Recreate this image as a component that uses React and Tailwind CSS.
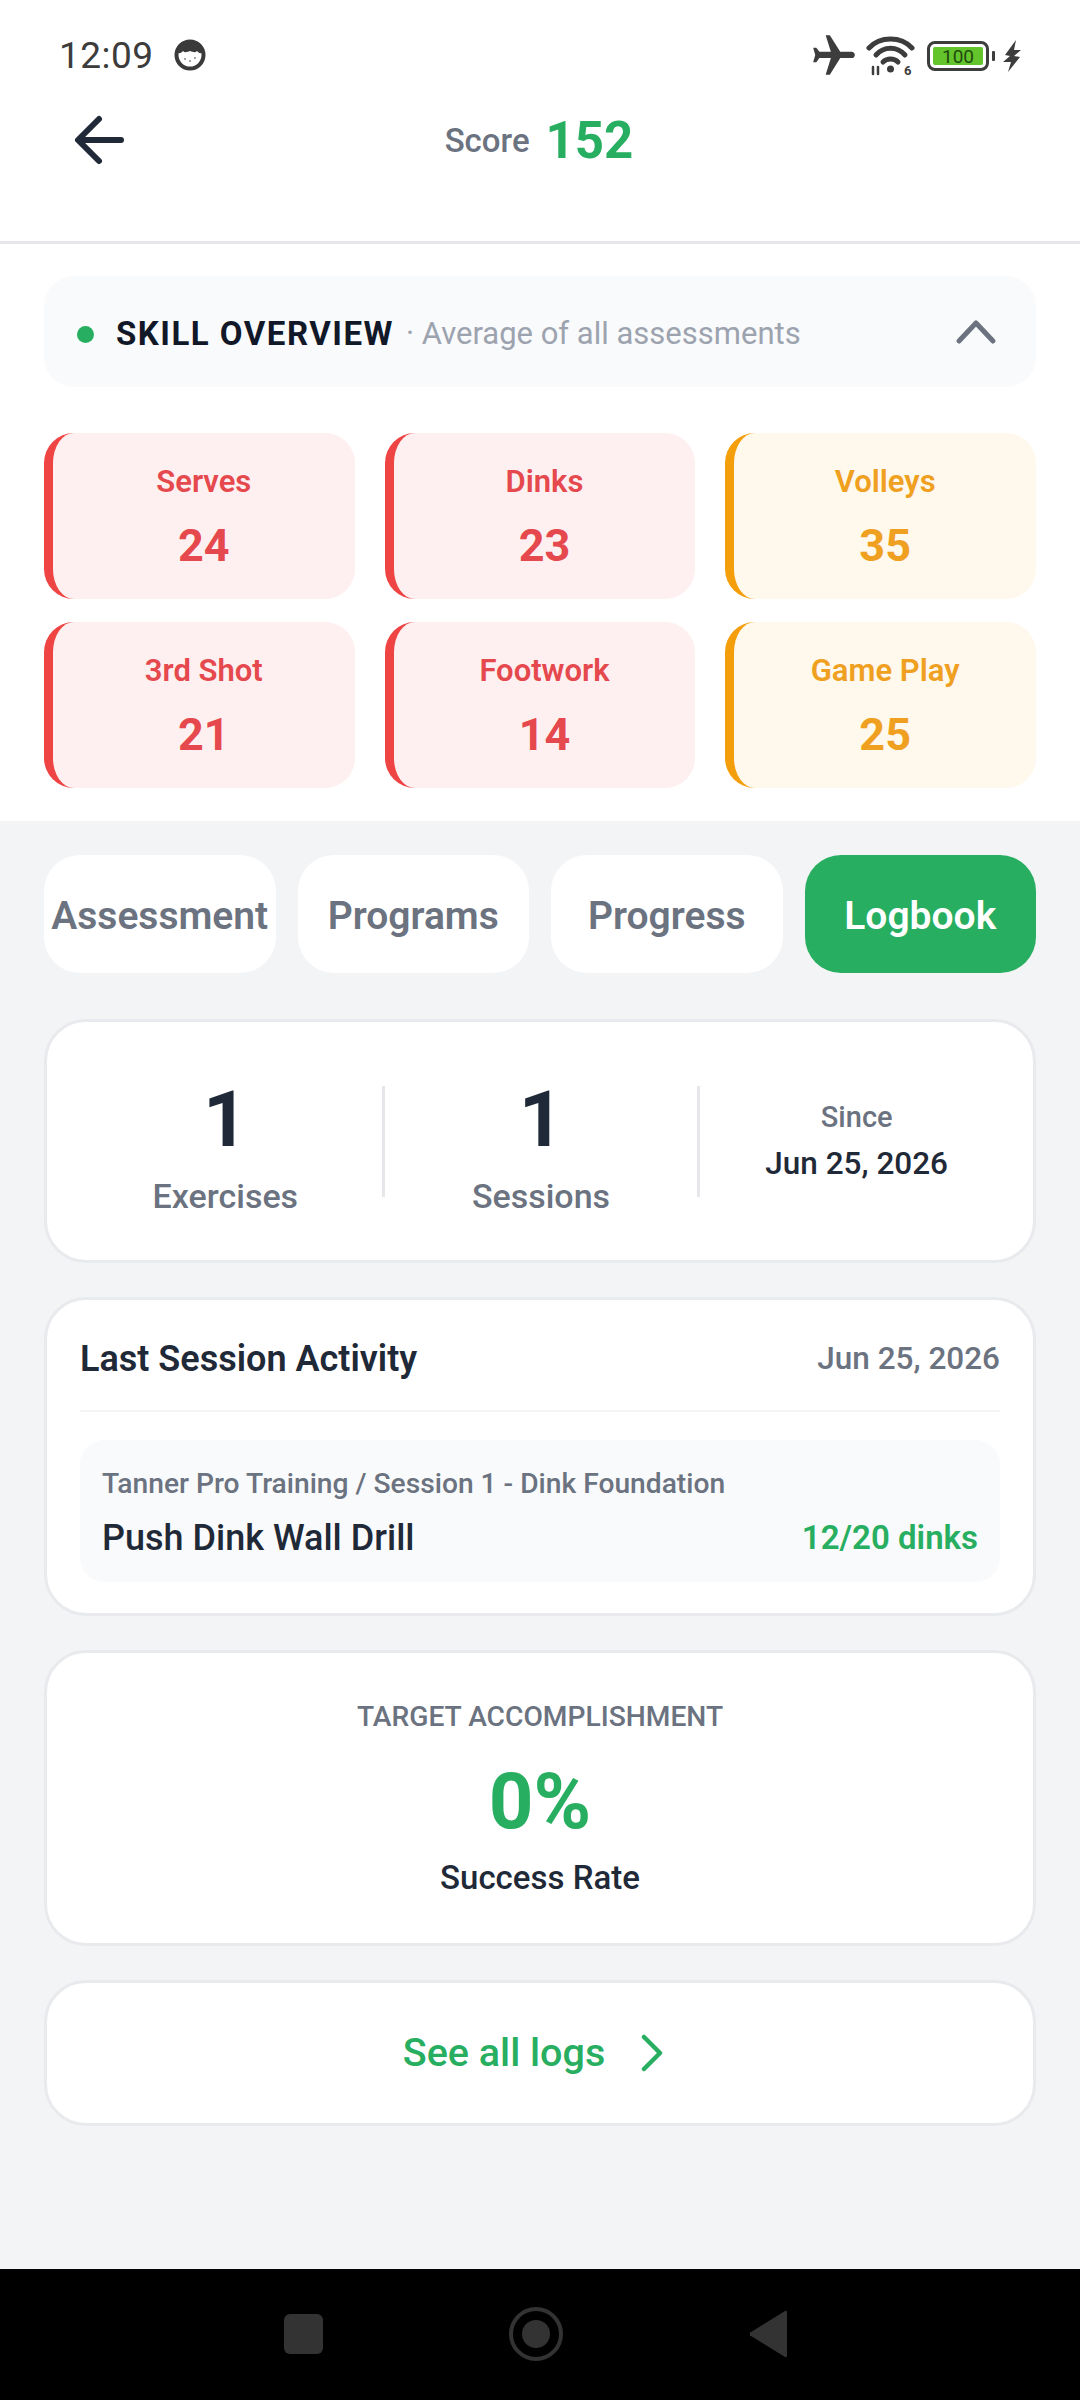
import React from 'react';

const SKILLS = [
    { label: 'Serves', value: 24, tone: 'red' },
    { label: 'Dinks', value: 23, tone: 'red' },
    { label: 'Volleys', value: 35, tone: 'amber' },
    { label: '3rd Shot', value: 21, tone: 'red' },
    { label: 'Footwork', value: 14, tone: 'red' },
    { label: 'Game Play', value: 25, tone: 'amber' },
];

const TABS = ['Assessment', 'Programs', 'Progress', 'Logbook'];

function StatusBar() {
    return (
        <div className="flex h-[88px] items-end justify-between pl-[59px] pr-[58px] pb-[8px]">
            <div className="flex items-center gap-[20px] h-[48px]">
                <span className="text-[37px] leading-[48px] text-[#3c3c3c] tracking-[0.5px]">12:09</span>
                <svg width="32" height="32" viewBox="0 0 32 32" className="mb-[2px]">
                    <circle cx="16" cy="16" r="13.5" fill="#fff" stroke="#3a3a3a" strokeWidth="4" />
                    <path d="M4 14C4 6 10 3 16 3s12 3 12 11c-2 1-4-1-5-2-2 2-4 1-7 0-3 1-5 2-7 0-1 1-3 3-5 2z" fill="#3a3a3a" />
                    <circle cx="11" cy="20" r="1" fill="#888" />
                    <circle cx="16" cy="22" r="1" fill="#888" />
                    <circle cx="21" cy="19" r="1" fill="#888" />
                </svg>
            </div>
            <div className="flex items-center h-[48px]">
                <svg width="50" height="50" viewBox="0 0 24 24" fill="#3d3d3d" className="mr-[7px]">
                    <path transform="rotate(90 12 12)" d="M21 16v-2l-8-5V3.5c0-.83-.67-1.5-1.5-1.5S10 2.67 10 3.5V9l-8 5v2l8-2.5V19l-2 1.5V22l3.5-1 3.5 1v-1.5L13 19v-5.5l8 2.5z" />
                </svg>
                <svg width="50" height="44" viewBox="0 0 50 44" fill="none" stroke="#3d3d3d" strokeLinecap="round" className="mr-[11px] mt-[2px]">
                    <path d="M3 13C14 1 35 1 46 13" strokeWidth="5" />
                    <path d="M10 20C18 11 31 11 39 20" strokeWidth="5" />
                    <path d="M17 27c4-4 11-4 15 0" strokeWidth="5" />
                    <circle cx="24.500" cy="34" r="3.500" fill="#3d3d3d" stroke="none" />
                    <path d="M7 39v-7M12 32v7" strokeWidth="2.500" />
                    <text x="38" y="40" fontSize="13" fontWeight="700" fill="#3d3d3d" stroke="none" fontFamily="Roboto">6</text>
                </svg>
                <div className="flex items-center h-[30px] w-[62px] rounded-[8px] border-[3.5px] border-[#3d3d3d] p-[3px]">
                    <div className="flex items-center justify-center h-full w-full rounded-[2px] bg-[#63c52b] text-[19px] leading-none text-[#1f4a0e]">100</div>
                </div>
                <div className="ml-[3px] h-[10px] w-[3px] rounded-[1px] bg-[#3d3d3d]" />
                <svg width="20" height="32" viewBox="0 0 20 32" fill="#3d3d3d" className="ml-[7px]">
                    <path d="M14 0 3 15l5 1-7 6 8 0-3 10 12-15-6-1 7-6-7 0z" />
                </svg>
            </div>
        </div>
    );
}

function Header() {
    return (
        <div className="relative flex h-[156px] items-start justify-center border-b-[3px] border-[#e5e7eb]">
            <svg width="60" height="60" viewBox="0 0 60 60" fill="none" stroke="#1f2937" strokeWidth="6" strokeLinecap="round" strokeLinejoin="round" className="absolute left-[70px] top-[22px]">
                <path d="M51 30H9M29 9 8 30l21 21" />
            </svg>
            <div className="flex items-center gap-[16px] h-[106px] pr-[2px]">
                <span className="text-[33px] font-medium text-[#6b7280]">Score</span>
                <span className="text-[51px] font-bold text-[#27ae60]">152</span>
            </div>
        </div>
    );
}

function SkillCard({ skill }) {
    const isRed = skill.tone === 'red';
    return (
        <div className={`flex h-[166px] flex-col items-center rounded-[30px] border-l-[9px] pt-[29px] ${isRed ? 'border-[#ef4444] bg-[#fef0f0] text-[#e5484d]' : 'border-[#f59e0b] bg-[#fff8ec] text-[#f0a020]'}`}>
            <span className="text-[31px] leading-[40px] font-semibold">{skill.label}</span>
            <span className="mt-[17px] text-[45px] leading-[54px] font-bold">{skill.value}</span>
        </div>
    );
}

function SkillOverview() {
    return (
        <div className="h-[577px] bg-white px-[44px] pt-[32px]">
            <div className="flex h-[111px] items-center rounded-[30px] bg-[#f9fafb] pl-[33px] pr-[38px] pt-[5px]">
                <span className="h-[17px] w-[17px] rounded-full bg-[#27ae60]" />
                <span className="ml-[22px] text-[33px] font-bold tracking-[1.5px] text-[#111827]">SKILL OVERVIEW</span>
                <span className="ml-[12px] text-[31px] text-[#9ca3af]">· Average of all assessments</span>
                <svg width="44" height="44" viewBox="0 0 44 44" fill="none" stroke="#6b7280" strokeWidth="5" strokeLinecap="round" strokeLinejoin="round" className="ml-auto mb-[5px]">
                    <path d="M5 31 22 13l17 18" />
                </svg>
            </div>
            <div className="mt-[46px] grid grid-cols-3 gap-x-[30px] gap-y-[23px]">
                {SKILLS.map(s => <SkillCard key={s.label} skill={s} />)}
            </div>
        </div>
    );
}

function Tabs() {
    return (
        <div className="grid grid-cols-4 gap-[22px]">
            {TABS.map(t => (
                <div key={t} className={`flex h-[118px] items-center justify-center rounded-[36px] pt-[5px] text-[39px] font-semibold ${t === 'Logbook' ? 'bg-[#27ae60] text-white' : 'bg-white text-[#6b7280]'}`}>
                    {t}
                </div>
            ))}
        </div>
    );
}

function Card({ className, children }) {
    return <div className={`rounded-[42px] border-[3px] border-[#e8eaed] bg-white ${className}`}>{children}</div>;
}

function StatsCard() {
    return (
        <Card className="mt-[46px] flex h-[244px] items-center pl-[22px] pr-[20px]">
            <div className="flex flex-1 flex-col items-center pt-[9px]">
                <span className="text-[78px] leading-[92px] font-bold text-[#1f2937]">1</span>
                <span className="mt-[8px] text-[34px] leading-[44px] font-medium text-[#6b7280]">Exercises</span>
            </div>
            <div className="h-[111px] w-[3px] bg-[#e5e7eb]" />
            <div className="flex flex-1 flex-col items-center pt-[9px]">
                <span className="text-[78px] leading-[92px] font-bold text-[#1f2937]">1</span>
                <span className="mt-[8px] text-[34px] leading-[44px] font-medium text-[#6b7280]">Sessions</span>
            </div>
            <div className="h-[111px] w-[3px] bg-[#e5e7eb]" />
            <div className="flex flex-1 flex-col items-center">
                <span className="text-[29px] leading-[40px] font-medium text-[#6b7280]">Since</span>
                <span className="mt-[5px] text-[31.500px] leading-[44px] font-medium text-[#1f2937]">Jun 25, 2026</span>
            </div>
        </Card>
    );
}

function LastSessionCard() {
    return (
        <Card className="mt-[34px] h-[319px] px-[33px]">
            <div className="flex h-[112px] items-center justify-between border-b-[2px] border-[#f3f4f6] pt-[8px]">
                <span className="text-[36px] font-semibold text-[#1f2937]">Last Session Activity</span>
                <span className="text-[31.500px] font-medium text-[#6b7280]">Jun 25, 2026</span>
            </div>
            <div className="mt-[28px] flex h-[142px] flex-col justify-center rounded-[24px] bg-[#f9fafb] px-[22px]">
                <span className="pt-[3px] text-[28.200px] leading-[40px] font-medium text-[#6b7280]">Tanner Pro Training / Session 1 - Dink Foundation</span>
                <div className="mt-[10px] flex items-center justify-between">
                    <span className="text-[36px] leading-[48px] font-medium text-[#1f2937]">Push Dink Wall Drill</span>
                    <span className="text-[33px] leading-[48px] font-semibold text-[#27ae60]">12/20 dinks</span>
                </div>
            </div>
        </Card>
    );
}

function TargetCard() {
    return (
        <Card className="mt-[34px] flex h-[296px] flex-col items-center pt-[44px]">
            <span className="text-[28.200px] leading-[40px] font-medium text-[#6b7280]">TARGET ACCOMPLISHMENT</span>
            <span className="mt-[20px] text-[78px] leading-[90px] font-bold text-[#27ae60]">0%</span>
            <span className="mt-[9px] text-[33px] leading-[44px] font-medium text-[#1f2937]">Success Rate</span>
        </Card>
    );
}

function NavBar() {
    return (
        <div className="flex h-[131px] items-center bg-black pl-[284px] pb-[2px]">
            <div className="h-[40px] w-[39px] rounded-[6px] bg-[#333]" />
            <svg width="56" height="56" viewBox="0 0 56 56" className="ml-[185px]">
                <circle cx="28" cy="28" r="25" fill="none" stroke="#333" strokeWidth="4" />
                <circle cx="28" cy="28" r="14" fill="#333" />
            </svg>
            <svg width="38" height="48" viewBox="0 0 38 48" className="ml-[186px]">
                <path d="M37 2a1.500 1.500 0 0 0-2-1L1 22a2 2 0 0 0 0 4l34 21a1.500 1.500 0 0 0 2-1z" fill="#333" />
            </svg>
        </div>
    );
}

export default function App() {
    return (
        <div className="flex h-[2400px] w-[1080px] flex-col bg-[#f3f4f6] font-['Roboto',sans-serif]">
            <div className="bg-white">
                <StatusBar />
                <Header />
            </div>
            <SkillOverview />
            <div className="flex-1 px-[44px] pt-[34px]">
                <Tabs />
                <StatsCard />
                <LastSessionCard />
                <TargetCard />
                <Card className="mt-[34px] flex h-[146px] items-center justify-center gap-[34px] pr-[12px]">
                    <span className="text-[39.500px] font-medium text-[#27ae60]">See all logs</span>
                    <svg width="26" height="38" viewBox="0 0 26 38" fill="none" stroke="#27ae60" strokeWidth="4.5" strokeLinecap="round" strokeLinejoin="round">
                        <path d="M5 3l16 16L5 35" />
                    </svg>
                </Card>
            </div>
            <NavBar />
        </div>
    );
}
